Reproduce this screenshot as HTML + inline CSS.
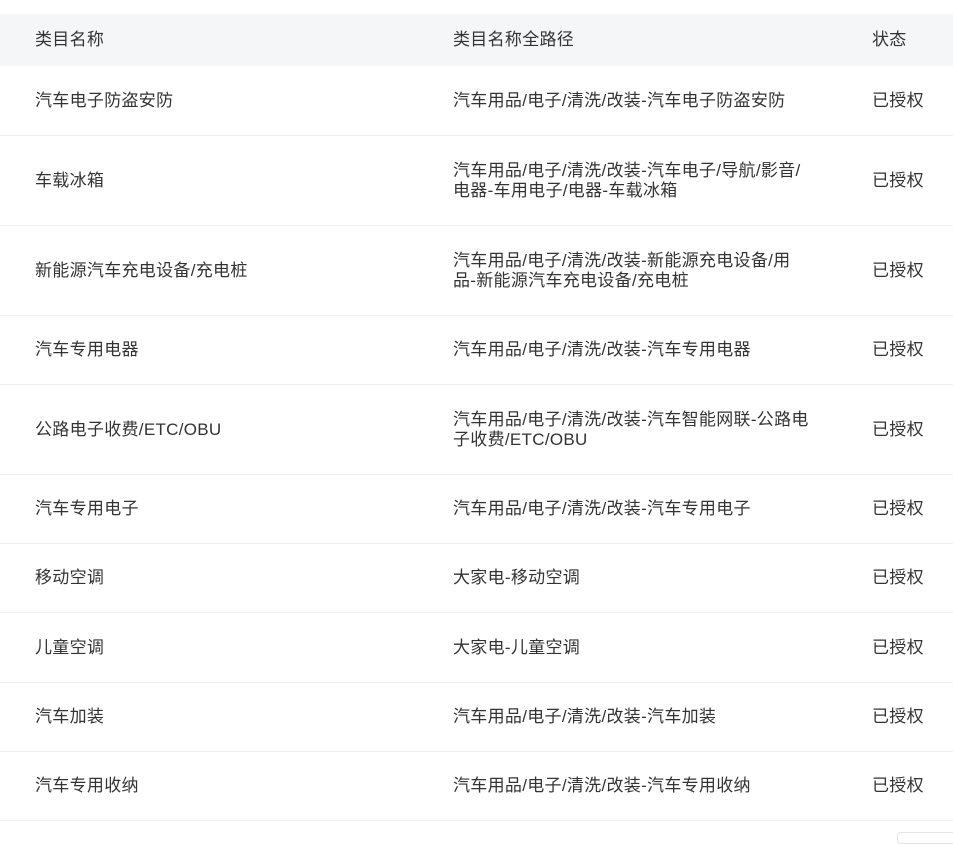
<!DOCTYPE html>
<html><head><meta charset="utf-8"><style>
body{margin:0;background:#fff;width:953px;height:837px;overflow:hidden;font-family:"Liberation Sans","Noto Sans CJK SC",sans-serif;font-size:17px;letter-spacing:0.3px;color:#333;line-height:20px}
.r{position:absolute;left:0;width:953px;display:flex;align-items:center;border-bottom:1px solid #f0f0f0;box-sizing:border-box}
.h{background:#f5f6f8;border-bottom:none}
.r span{display:block;line-height:20px}
.c1{margin-left:35px;width:418px;flex:none}
.c2{width:419px;flex:none;white-space:nowrap}
.c3{flex:none}
</style></head><body>
<div class="r h" style="top:14px;height:52px"><span class="c1">类目名称</span><span class="c2">类目名称全路径</span><span class="c3">状态</span></div>
<div class="r" style="top:66px;height:70px"><span class="c1">汽车电子防盗安防</span><span class="c2">汽车用品/电子/清洗/改装-汽车电子防盗安防</span><span class="c3">已授权</span></div>
<div class="r" style="top:136px;height:90px"><span class="c1">车载冰箱</span><span class="c2">汽车用品/电子/清洗/改装-汽车电子/导航/影音/<br>电器-车用电子/电器-车载冰箱</span><span class="c3">已授权</span></div>
<div class="r" style="top:226px;height:90px"><span class="c1">新能源汽车充电设备/充电桩</span><span class="c2">汽车用品/电子/清洗/改装-新能源充电设备/用<br>品-新能源汽车充电设备/充电桩</span><span class="c3">已授权</span></div>
<div class="r" style="top:316px;height:69px"><span class="c1">汽车专用电器</span><span class="c2">汽车用品/电子/清洗/改装-汽车专用电器</span><span class="c3">已授权</span></div>
<div class="r" style="top:385px;height:90px"><span class="c1">公路电子收费/ETC/OBU</span><span class="c2">汽车用品/电子/清洗/改装-汽车智能网联-公路电<br>子收费/ETC/OBU</span><span class="c3">已授权</span></div>
<div class="r" style="top:475px;height:69px"><span class="c1">汽车专用电子</span><span class="c2">汽车用品/电子/清洗/改装-汽车专用电子</span><span class="c3">已授权</span></div>
<div class="r" style="top:544px;height:69px"><span class="c1">移动空调</span><span class="c2">大家电-移动空调</span><span class="c3">已授权</span></div>
<div class="r" style="top:613px;height:70px"><span class="c1">儿童空调</span><span class="c2">大家电-儿童空调</span><span class="c3">已授权</span></div>
<div class="r" style="top:683px;height:69px"><span class="c1">汽车加装</span><span class="c2">汽车用品/电子/清洗/改装-汽车加装</span><span class="c3">已授权</span></div>
<div class="r" style="top:752px;height:69px"><span class="c1">汽车专用收纳</span><span class="c2">汽车用品/电子/清洗/改装-汽车专用收纳</span><span class="c3">已授权</span></div>
<div style="position:absolute;left:897px;top:832px;width:60px;height:10px;border:1px solid #e5e5e5;border-radius:3px"></div>
</body></html>
